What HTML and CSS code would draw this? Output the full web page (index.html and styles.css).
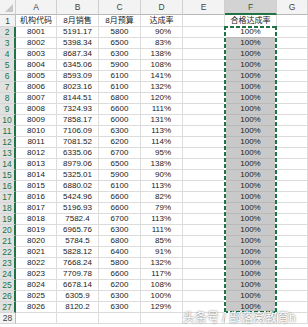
FILE: index.html
```html
<!DOCTYPE html>
<html lang="zh">
<head>
    <meta charset="UTF-8">
    <meta name="viewport" content="width=device-width, initial-scale=1.0">
    <title>合格达成率</title>
    <link rel="stylesheet" href="styles.css">
</head>
<body>
    <div class="sheet">
        <span class="ch corner"></span><span class="ch">A</span><span class="ch">B</span><span class="ch">C</span><span class="ch">D</span><span class="ch">E</span><span class="ch on">F</span><span class="ch">G</span>

        <span class="rh">1</span><span>机构代码</span><span>8月销售</span><span>8月预算</span><span>达成率</span><span></span><span>合格达成率</span><span></span>
        <span class="rh sel">2</span><span>8001</span><span>5191.17</span><span>5800</span><span class="pct">90%</span><span></span><span class="f act">100%</span><span></span>
        <span class="rh sel">3</span><span>8002</span><span>5398.34</span><span>6500</span><span class="pct">83%</span><span></span><span class="f">100%</span><span></span>
        <span class="rh sel">4</span><span>8003</span><span>8687.34</span><span>6300</span><span class="pct">138%</span><span></span><span class="f">100%</span><span></span>
        <span class="rh sel">5</span><span>8004</span><span>6345.06</span><span>5900</span><span class="pct">108%</span><span></span><span class="f">100%</span><span></span>
        <span class="rh sel">6</span><span>8005</span><span>8593.09</span><span>6100</span><span class="pct">141%</span><span></span><span class="f">100%</span><span></span>
        <span class="rh sel">7</span><span>8006</span><span>8023.16</span><span>6100</span><span class="pct">132%</span><span></span><span class="f">100%</span><span></span>
        <span class="rh sel">8</span><span>8007</span><span>8144.51</span><span>6800</span><span class="pct">120%</span><span></span><span class="f">100%</span><span></span>
        <span class="rh sel">9</span><span>8008</span><span>7324.93</span><span>6600</span><span class="pct">111%</span><span></span><span class="f">100%</span><span></span>
        <span class="rh sel">10</span><span>8009</span><span>7858.17</span><span>6000</span><span class="pct">131%</span><span></span><span class="f">100%</span><span></span>
        <span class="rh sel">11</span><span>8010</span><span>7106.09</span><span>6300</span><span class="pct">113%</span><span></span><span class="f">100%</span><span></span>
        <span class="rh sel">12</span><span>8011</span><span>7081.52</span><span>6200</span><span class="pct">114%</span><span></span><span class="f">100%</span><span></span>
        <span class="rh sel">13</span><span>8012</span><span>6335.06</span><span>6700</span><span class="pct">95%</span><span></span><span class="f">100%</span><span></span>
        <span class="rh sel">14</span><span>8013</span><span>8979.06</span><span>6500</span><span class="pct">138%</span><span></span><span class="f">100%</span><span></span>
        <span class="rh sel">15</span><span>8014</span><span>5325.01</span><span>5900</span><span class="pct">90%</span><span></span><span class="f">100%</span><span></span>
        <span class="rh sel">16</span><span>8015</span><span>6880.02</span><span>6100</span><span class="pct">113%</span><span></span><span class="f">100%</span><span></span>
        <span class="rh sel">17</span><span>8016</span><span>5424.96</span><span>6600</span><span class="pct">82%</span><span></span><span class="f">100%</span><span></span>
        <span class="rh sel">18</span><span>8017</span><span>5196.93</span><span>6600</span><span class="pct">79%</span><span></span><span class="f">100%</span><span></span>
        <span class="rh sel">19</span><span>8018</span><span>7582.4</span><span>6700</span><span class="pct">113%</span><span></span><span class="f">100%</span><span></span>
        <span class="rh sel">20</span><span>8019</span><span>6965.76</span><span>6300</span><span class="pct">111%</span><span></span><span class="f">100%</span><span></span>
        <span class="rh sel">21</span><span>8020</span><span>5784.5</span><span>6800</span><span class="pct">85%</span><span></span><span class="f">100%</span><span></span>
        <span class="rh sel">22</span><span>8021</span><span>5828.12</span><span>6400</span><span class="pct">91%</span><span></span><span class="f">100%</span><span></span>
        <span class="rh sel">23</span><span>8022</span><span>7668.24</span><span>5800</span><span class="pct">132%</span><span></span><span class="f">100%</span><span></span>
        <span class="rh sel">24</span><span>8023</span><span>7709.78</span><span>6600</span><span class="pct">117%</span><span></span><span class="f">100%</span><span></span>
        <span class="rh sel">25</span><span>8024</span><span>6678.14</span><span>6200</span><span class="pct">108%</span><span></span><span class="f">100%</span><span></span>
        <span class="rh sel">26</span><span>8025</span><span>6305.9</span><span>6300</span><span class="pct">100%</span><span></span><span class="f">100%</span><span></span>
        <span class="rh sel">27</span><span>8026</span><span>8120.2</span><span>6300</span><span class="pct">129%</span><span></span><span class="f">100%</span><span></span>
        <span class="rh">28</span><span></span><span></span><span></span><span></span><span></span><span></span><span></span>

        <!-- copy marquee around F2:F27 -->
        <div class="marquee"></div>
    </div>

    <div class="watermark">头条号 / 部落窝教育h</div>
</body>
</html>
```

FILE: styles.css
```css
body {
    margin: 0;
    height: 100vh;
    overflow: hidden;
    position: relative;
    background-color: #fff;
    font-family: "Liberation Sans", "Noto Sans CJK SC", sans-serif;
    color: #222;
}

.sheet {
    position: relative;
    display: grid;
    grid-template-columns: 16px 41px 42px 42px 42px 42px 52px 1fr;
    grid-template-rows: 15px 12px repeat(27, 11px);
    font-size: 8px;
}

.sheet > span {
    box-sizing: border-box;
    border-right: 1px solid #dcdcdc;
    border-bottom: 1px solid #dcdcdc;
    display: flex;
    align-items: flex-end;
    justify-content: center;
    line-height: 10px;
    white-space: nowrap;
    overflow: hidden;
}

/* column headers */
.sheet > .ch {
    background-color: #f3f3f3;
    border-right-color: #d0d0d0;
    border-bottom-color: #b8b8b8;
    align-items: center;
    color: #444;
    font-size: 8.5px;
}

.sheet > .ch.on {
    background-color: #d3d3d3;
    border-bottom: 2px solid #217346;
    color: #1e5c3a;
}

.corner {
    position: relative;
}

.corner::after {
    content: "";
    position: absolute;
    right: 2px;
    bottom: 2px;
    border-left: 8px solid transparent;
    border-bottom: 8px solid #c6c6c6;
}

/* row headers */
.sheet > .rh {
    background-color: #f3f3f3;
    border-right-color: #bdbdbd;
    border-bottom-color: #d6d6d6;
    align-items: center;
    color: #444;
    font-size: 8.5px;
}

.sheet > .rh.sel {
    background-color: #e1e1e1;
    border-right: 2px solid #217346;
    color: #217346;
}

.sheet > .pct {
    justify-content: flex-end;
    padding-right: 11px;
}

.sheet > .f {
    background-color: #c9c9c9;
    border-bottom-color: #b9b9b9;
    border-right-color: #b9b9b9;
}

.sheet > .f.act {
    background-color: #fff;
}

/* sits over the F2:F27 area, out of the auto placement */
.marquee {
    position: absolute;
    grid-column: 7 / 8;
    grid-row: 3 / 29;
    top: -1px;
    bottom: 0;
    left: -1px;
    right: 0;
    pointer-events: none;
    background:
        repeating-linear-gradient(to bottom, #217346 0 4px, #fff 4px 6px) left / 2px 100% no-repeat,
        repeating-linear-gradient(to bottom, #217346 0 4px, #fff 4px 6px) right / 2px 100% no-repeat,
        repeating-linear-gradient(to right, #217346 0 4px, #fff 4px 6px) top / 100% 2px no-repeat,
        repeating-linear-gradient(to right, #217346 0 4px, #fff 4px 6px) bottom / 100% 2px no-repeat;
}

.watermark {
    position: absolute;
    left: 183px;
    top: 308px;
    font-size: 12px;
    white-space: nowrap;
    color: #fff;
    text-shadow: 0 0 2px rgba(0, 0, 0, 0.7);
}
```
